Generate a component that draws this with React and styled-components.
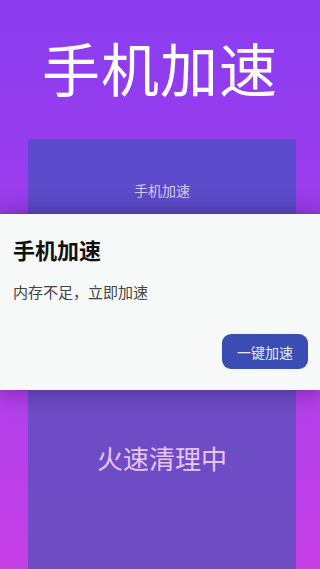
import React from "react";
import styled, { createGlobalStyle } from "styled-components";

const GlobalStyle = createGlobalStyle`
    html, body {
        margin: 0;
        padding: 0;
    }
    body {
        font-family: "Noto Sans CJK SC", "Noto Sans", sans-serif;
    }
`;

const Screen = styled.div`
    position: relative;
    box-sizing: border-box;
    width: 320px;
    height: 569px;
    overflow: hidden;
    display: flex;
    flex-direction: column;
    background: linear-gradient(180deg, #8a3cf0 0%, #a03eec 45%, #c640e6 100%);
`;

const Heading = styled.h1`
    margin: 0;
    height: 139px;
    display: flex;
    align-items: center;
    justify-content: center;
    padding-bottom: 6px;
    box-sizing: border-box;
    color: #ffffff;
    font-size: 58px;
    font-weight: 400;
    letter-spacing: 1px;
`;

const Panel = styled.div`
    flex: 1;
    width: 268px;
    margin-left: 28px;
    display: flex;
    flex-direction: column;
    align-items: center;
    background: linear-gradient(180deg, #5c4bcd 0%, #5f4bca 30%, #6d4cc6 60%, #704cc4 100%);
`;

const PanelLabel = styled.div`
    margin-top: 41px;
    color: rgba(255, 255, 255, 0.72);
    font-size: 14px;
    line-height: 20px;
`;

const PanelStatus = styled.div`
    margin-top: 240px;
    color: #e7c6f2;
    font-size: 26px;
    line-height: 36px;
`;

const Dialog = styled.div`
    position: absolute;
    left: 0;
    right: 0;
    top: 214px;
    height: 176px;
    box-sizing: border-box;
    padding: 20px 13px 0;
    display: flex;
    flex-direction: column;
    background: #f7f8f8;
    box-shadow: 0 0 22px rgba(30, 10, 60, 0.45);
`;

const DialogTitle = styled.div`
    color: #111111;
    font-size: 22px;
    font-weight: 700;
    line-height: 30px;
`;

const DialogText = styled.div`
    margin-top: 18px;
    color: #444444;
    font-size: 15px;
    line-height: 20px;
`;

const Actions = styled.div`
    margin-top: 32px;
    display: flex;
    justify-content: flex-end;
`;

const Button = styled.button`
    width: 86px;
    height: 35px;
    margin-right: -1px;
    border: none;
    border-radius: 9px;
    background: #3a4db3;
    color: #e8eaf6;
    font-family: inherit;
    font-size: 14px;
    cursor: pointer;
`;

const App = () => {
    return (
        <>
            <GlobalStyle />
            <Screen>
                <Heading>手机加速</Heading>
                <Panel>
                    <PanelLabel>手机加速</PanelLabel>
                    <PanelStatus>火速清理中</PanelStatus>
                </Panel>
                <Dialog>
                    <DialogTitle>手机加速</DialogTitle>
                    <DialogText>内存不足，立即加速</DialogText>
                    <Actions>
                        <Button>一键加速</Button>
                    </Actions>
                </Dialog>
            </Screen>
        </>
    );
};

export default App;
